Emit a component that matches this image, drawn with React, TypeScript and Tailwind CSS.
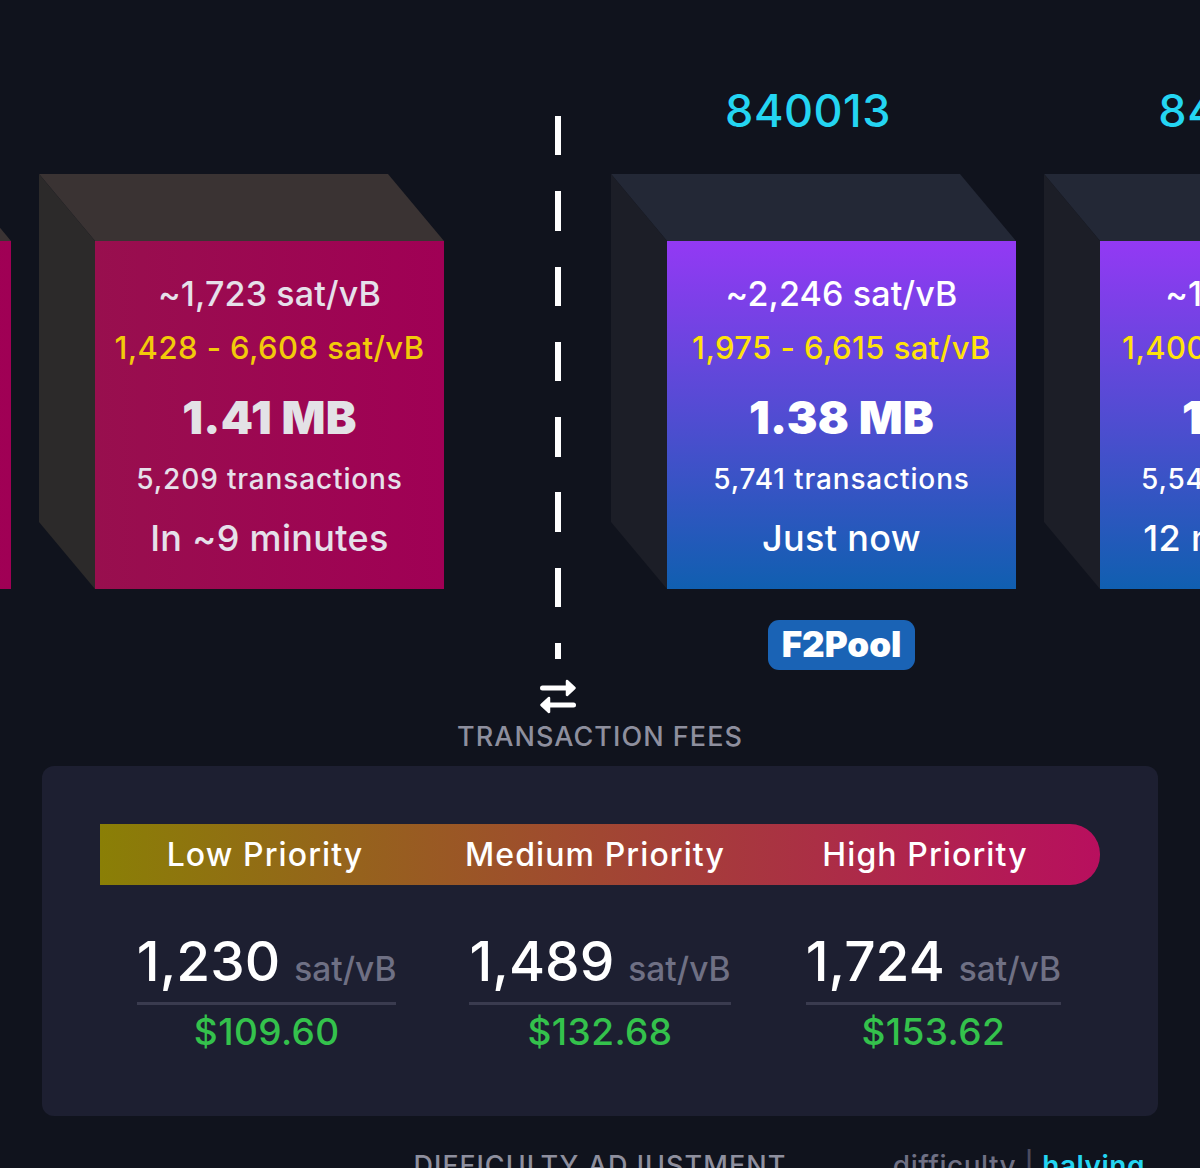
const font = { fontFamily: "Inter, 'Noto Sans', sans-serif" };

type BlockData = {
  label?: string;
  variant: "red" | "blue";
  fee: string;
  range: string;
  size: string;
  tx: string;
  time: string;
  pool?: string;
};

function Block({ b }: { b: BlockData }) {
  const red = b.variant === "red";
  return (
    <div className="w-[349px] shrink-0">
      <div className="h-[60px] mb-[101px] pt-[1px] pr-[67px] text-center text-[45px] font-medium leading-[60px] tracking-[0.5px] text-[#24d5f2] whitespace-nowrap">
        {b.label}
      </div>
      <div className="relative h-[348px] w-[349px]">
        <svg className="absolute left-[-56px] top-[-67px]" width="405" height="415" viewBox="0 0 405 415">
          <polygon points="0,0 349,0 405,67 56,67" fill={red ? "#3a3333" : "#232836"} />
          <polygon points="0,0 56,67 56,415 0,348" fill={red ? "#2c2a2a" : "#1c1e27"} />
        </svg>
        <div
          className={
            "relative flex h-full flex-col items-center whitespace-nowrap font-medium " +
            (red
              ? "bg-[linear-gradient(to_right,#980f4e,#a00055)] text-[#e6e0ea]"
              : "bg-[linear-gradient(to_bottom,#9339f4,#105fb0)] text-white")
          }
        >
          <div className="mt-[30px] h-[46px] text-[34px] leading-[46px] tracking-[0.15px]">{b.fee}</div>
          <div className={"mt-[8px] h-[46px] text-[31px] leading-[46px] tracking-[0.45px] " + (red ? "text-[#f2ca0a]" : "text-[#ffe20a]")}>
            {b.range}
          </div>
          <div className={"mt-[16px] h-[60px] text-[46px] font-black leading-[60px] tracking-[0.3px] " + (red ? "text-[#e3e2e6]" : "text-white")}>
            {b.size}
          </div>
          <div className="mt-[12px] h-[40px] text-[28px] leading-[40px] tracking-[0.85px]">{b.tx}</div>
          <div className="mt-[14px] h-[50px] text-[36px] leading-[50px] tracking-[0.35px]">{b.time}</div>
        </div>
      </div>
      {b.pool && (
        <div className="mt-[31px] flex justify-center">
          <div className="flex h-[50px] w-[147px] items-center justify-center rounded-[11px] bg-[#1a63b5] pb-[2px] text-[35px] font-black text-white">
            {b.pool}
          </div>
        </div>
      )}
    </div>
  );
}

function Fee({ value, usd }: { value: string; usd: string }) {
  return (
    <div className="flex flex-col items-center">
      <div className="flex items-baseline gap-[14px] whitespace-nowrap border-b-[3px] border-[#3a3b4f] pb-[7px]">
        <span className="text-[55px] font-medium leading-[68px] text-white">{value}</span>
        <span className="text-[33.5px] font-medium leading-[40px] text-[#6f7084]">sat/vB</span>
      </div>
      <div className="mt-[3px] text-[37px] font-medium leading-[48px] tracking-[0.4px] text-[#34c24c]">{usd}</div>
    </div>
  );
}

export default function App() {
  const left: BlockData = { variant: "red", fee: "", range: "", size: "", tx: "", time: "" };
  const mempool: BlockData = {
    variant: "red",
    fee: "~1,723 sat/vB",
    range: "1,428 - 6,608 sat/vB",
    size: "1.41 MB",
    tx: "5,209 transactions",
    time: "In ~9 minutes",
  };
  const mined: BlockData = {
    label: "840013",
    variant: "blue",
    fee: "~2,246 sat/vB",
    range: "1,975 - 6,615 sat/vB",
    size: "1.38 MB",
    tx: "5,741 transactions",
    time: "Just now",
    pool: "F2Pool",
  };
  const next: BlockData = {
    label: "840012",
    variant: "blue",
    fee: "~1,941 sat/vB",
    range: "1,400 - 6,601 sat/vB",
    size: "1.39 MB",
    tx: "5,544 transactions",
    time: "12 minutes ago",
  };
  return (
    <div style={font} className="h-[1168px] w-[1200px] overflow-hidden bg-[#10131d] pt-[80px]">
      <div className="ml-[-338px] flex">
        <Block b={left} />
        <div className="ml-[84px]">
          <Block b={mempool} />
        </div>
        <div className="flex w-[223px] shrink-0 flex-col items-center pl-[5px] pt-[36px]">
          <div className="h-[543px] w-[6px] bg-[repeating-linear-gradient(to_bottom,#ffffff_0,#ffffff_39.5px,transparent_39.5px,transparent_75.3px)]" />
          <svg className="mt-[20px]" width="36" height="35" viewBox="0 0 36 35" fill="#fff" stroke="#fff" strokeLinecap="round" strokeLinejoin="round">
            <path d="M2.5 9H28" fill="none" strokeWidth="5" />
            <path d="M27 2L34.5 9L27 16Z" strokeWidth="2.5" />
            <path d="M33.5 26H8" fill="none" strokeWidth="5" />
            <path d="M9 19L1.5 26L9 33Z" strokeWidth="2.5" />
          </svg>
        </div>
        <Block b={mined} />
        <div className="ml-[84px]">
          <Block b={next} />
        </div>
      </div>

      <div className="h-[44px] pt-[1px] text-center text-[27px] font-medium leading-[44px] tracking-[1.05px] text-[#8e8f9e]">TRANSACTION FEES</div>

      <div className="mx-[42px] mt-[8px] h-[350px] rounded-[12px] bg-[#1d1f31] px-[58px] pt-[58px]">
        <div className="grid h-[61px] grid-cols-3 items-center rounded-r-[30px] bg-[linear-gradient(to_right,#8a7f06,#b80f5e)] pr-[10px] text-center text-[32px] font-medium tracking-[1.1px] text-white">
          <div>Low Priority</div>
          <div>Medium Priority</div>
          <div>High Priority</div>
        </div>
        <div className="mt-[42px] grid grid-cols-3">
          <Fee value="1,230" usd="$109.60" />
          <Fee value="1,489" usd="$132.68" />
          <Fee value="1,724" usd="$153.62" />
        </div>
      </div>

      <div className="relative mt-[30px] text-center text-[27px] font-medium leading-[40px] tracking-[1.05px] text-[#8e8f9e]">
        DIFFICULTY ADJUSTMENT
        <div className="absolute right-[55px] top-0 text-[28px] tracking-[0.5px] text-[#6f7084]">
          difficulty <span className="text-[#4a4b5e]">|</span> <span className="font-semibold text-[#24d5f2]">halving</span>
        </div>
      </div>
    </div>
  );
}
